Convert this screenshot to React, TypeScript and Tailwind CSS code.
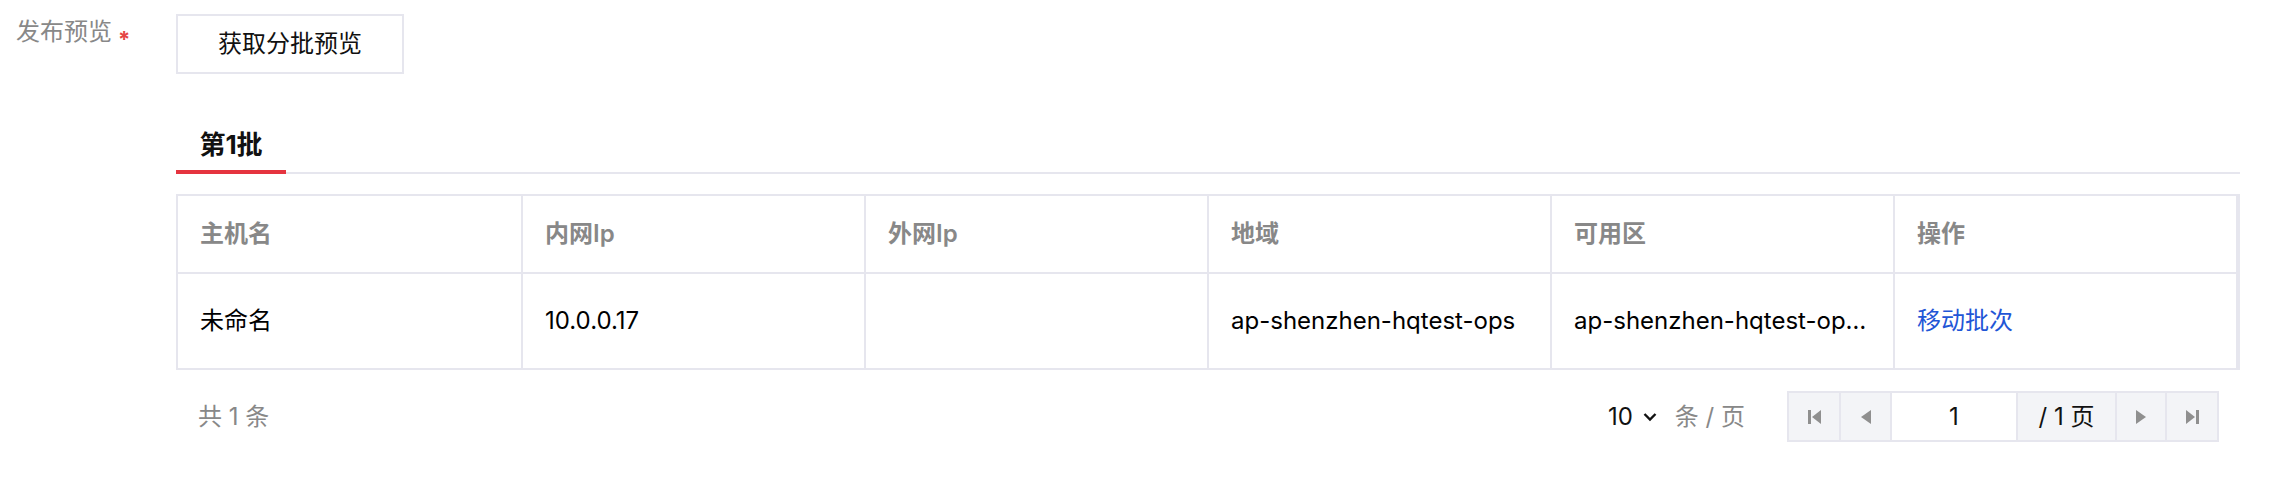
import React from "react";

const columns = ["主机名", "内网Ip", "外网Ip", "地域", "可用区", "操作"];

function FirstIcon() {
  return (
    <svg width="15" height="16" viewBox="0 0 15 16">
      <rect x="1" y="1" width="3" height="14" fill="#8f8f8f" />
      <path d="M14 1 L5 8 L14 15 Z" fill="#8f8f8f" />
    </svg>
  );
}

function PrevIcon() {
  return (
    <svg width="13" height="16" viewBox="0 0 13 16">
      <path d="M12 1 L2 8 L12 15 Z" fill="#8f8f8f" />
    </svg>
  );
}

function NextIcon() {
  return (
    <svg width="13" height="16" viewBox="0 0 13 16">
      <path d="M1 1 L11 8 L1 15 Z" fill="#8f8f8f" />
    </svg>
  );
}

function LastIcon() {
  return (
    <svg width="15" height="16" viewBox="0 0 15 16">
      <path d="M1 1 L10 8 L1 15 Z" fill="#8f8f8f" />
      <rect x="11" y="1" width="3" height="14" fill="#8f8f8f" />
    </svg>
  );
}

export default function App() {
  return (
    <div
      className="w-[2278px] h-[492px] bg-white text-[24px] text-black"
      style={{ fontFamily: 'Inter, "Noto Sans CJK SC", sans-serif' }}
    >
      <div className="flex pt-[14px] pl-[16px]">
        {/* Label */}
        <div className="w-[160px] shrink-0 flex items-start leading-[32px] mt-[2px]">
          <span className="text-[#888]">发布预览</span>
          <span className="ml-[6px] inline-block text-[22px] leading-[22px] mt-[12px] text-[#e54545] font-bold">*</span>
        </div>

        {/* Content */}
        <div className="w-[2064px]">
          <button className="h-[60px] w-[228px] border-2 border-[#e6e6ee] bg-white text-[24px] text-[#111]">
            获取分批预览
          </button>

          {/* Tabs */}
          <div className="mt-[54px] border-b-2 border-[#e6e6ee] flex">
            <div className="relative w-[110px] text-center font-bold text-[26px] leading-[34px] pb-[10px] text-[#111]">
              第1批
              <div className="absolute left-0 right-0 -bottom-[2px] h-[4px] bg-[#e5343f]" />
            </div>
          </div>

          {/* Table */}
          <div className="mt-[20px] border-2 border-r-4 border-[#e6e6ee]">
            <div className="grid grid-cols-6 h-[78px] border-b-2 border-[#e6e6ee]">
              {columns.map((c, i) => (
                <div
                  key={c}
                  className={`flex items-center pl-[22px] text-[#888] font-semibold ${i > 0 ? "border-l-2 border-[#e6e6ee]" : ""}`}
                >
                  {c}
                </div>
              ))}
            </div>
            <div className="grid grid-cols-6 h-[94px]">
              <div className="flex items-center pl-[22px]">未命名</div>
              <div className="flex items-center pl-[22px] border-l-2 border-[#e6e6ee]">10.0.0.17</div>
              <div className="flex items-center pl-[22px] border-l-2 border-[#e6e6ee]"></div>
              <div className="flex items-center pl-[22px] border-l-2 border-[#e6e6ee]">ap-shenzhen-hqtest-ops</div>
              <div className="flex items-center pl-[22px] border-l-2 border-[#e6e6ee] whitespace-nowrap overflow-hidden">
                ap-shenzhen-hqtest-op…
              </div>
              <div className="flex items-center pl-[22px] border-l-2 border-[#e6e6ee] text-[#1f56d6]">移动批次</div>
            </div>
          </div>

          {/* Footer / pagination */}
          <div className="mt-[21px] flex items-center justify-between pl-[22px] pr-[21px]">
            <span className="text-[#888]">共 1 条</span>
            <div className="flex items-center">
              <div className="flex items-center gap-[10px]">
                <span className="text-[#111]">10</span>
                <svg width="14" height="10" viewBox="0 0 14 10">
                  <path d="M1.5 2 L7 7.5 L12.5 2" stroke="#111" strokeWidth="2.4" fill="none" />
                </svg>
              </div>
              <span className="ml-[18px] text-[#888]">条 / 页</span>
              <div className="ml-[42px] flex h-[51px] border-2 border-[#e6e6ee] bg-[#f3f4f7]">
                <div className="w-[50px] flex items-center justify-center">
                  <FirstIcon />
                </div>
                <div className="w-[51px] flex items-center justify-center border-l-2 border-[#e6e6ee]">
                  <PrevIcon />
                </div>
                <div className="w-[126px] flex items-center justify-center bg-white border-l-2 border-[#e6e6ee] text-[#111]">
                  1
                </div>
                <div className="w-[99px] flex items-center justify-center border-l-2 border-[#e6e6ee] text-[#111]">
                  / 1 页
                </div>
                <div className="w-[50px] flex items-center justify-center border-l-2 border-[#e6e6ee]">
                  <NextIcon />
                </div>
                <div className="w-[52px] flex items-center justify-center border-l-2 border-[#e6e6ee]">
                  <LastIcon />
                </div>
              </div>
            </div>
          </div>
        </div>
      </div>
    </div>
  );
}
